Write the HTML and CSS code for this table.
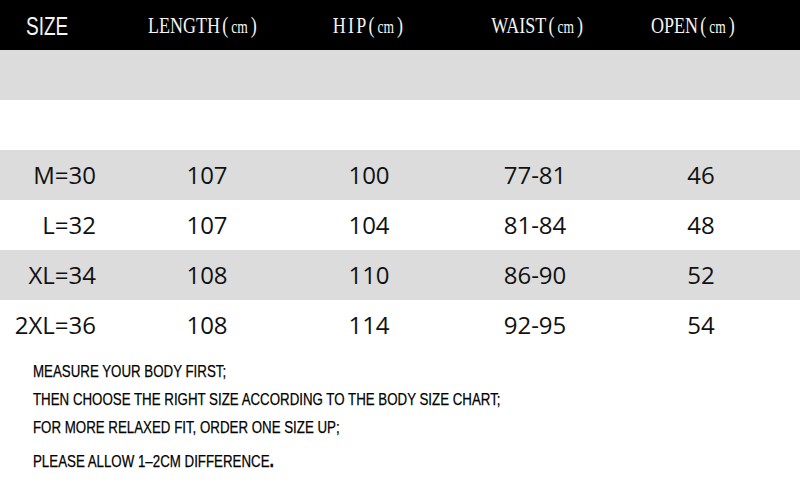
FILE: index.html
```html
<!DOCTYPE html>
<html>
<head>
<meta charset="utf-8">
<link rel="stylesheet" href="styles.css">
</head>
<body>
<div class="chart">
  <div class="head">
    <div class="hcell hsize"><span class="sizelabel">SIZE</span></div>
    <div class="hcell"><span class="hlabel">LENGTH<span class="unit">(<small>cm</small>)</span></span></div>
    <div class="hcell"><span class="hlabel"><span class="hip">HIP</span><span class="unit">(<small>cm</small>)</span></span></div>
    <div class="hcell"><span class="hlabel">WAIST<span class="unit">(<small>cm</small>)</span></span></div>
    <div class="hcell"><span class="hlabel">OPEN<span class="unit">(<small>cm</small>)</span></span></div>
  </div>
  <div class="band grey"></div>
  <div class="band"></div>
  <div class="row grey">
    <div class="c1">M=30</div><div class="c">107</div><div class="c">100</div><div class="c">77-81</div><div class="c">46</div>
  </div>
  <div class="row">
    <div class="c1">L=32</div><div class="c">107</div><div class="c">104</div><div class="c">81-84</div><div class="c">48</div>
  </div>
  <div class="row grey">
    <div class="c1">XL=34</div><div class="c">108</div><div class="c">110</div><div class="c">86-90</div><div class="c">52</div>
  </div>
  <div class="row">
    <div class="c1">2XL=36</div><div class="c">108</div><div class="c">114</div><div class="c">92-95</div><div class="c">54</div>
  </div>
  <div class="notes">
    <p class="note">MEASURE YOUR BODY FIRST;</p>
    <p class="note">THEN CHOOSE THE RIGHT SIZE ACCORDING TO THE BODY SIZE CHART;</p>
    <p class="note">FOR MORE RELAXED FIT, ORDER ONE SIZE UP;</p>
    <p class="note last">PLEASE ALLOW 1–2CM DIFFERENCE<b>.</b></p>
  </div>
</div>
</body>
</html>
```

FILE: styles.css
```css
html, body {
  margin: 0;
  padding: 0;
  background: #fff;
}
.chart {
  width: 800px;
  height: 500px;
  overflow: hidden;
}
.head {
  height: 50px;
  background: #000;
  display: grid;
  grid-template-columns: 120px 164px 168px 170px 142px 1fr;
  align-items: center;
}
.hcell {
  text-align: center;
  color: #f4f4f4;
  white-space: nowrap;
}
.hsize {
  text-align: left;
  padding-left: 26px;
}
.sizelabel {
  display: inline-block;
  font-family: "Liberation Sans", Arial, sans-serif;
  font-size: 25px;
  line-height: 50px;
  transform: scaleX(0.76);
  transform-origin: left center;
}
.hlabel {
  display: inline-block;
  font-family: "Liberation Serif", "Times New Roman", serif;
  font-size: 24px;
  line-height: 50px;
  transform: scaleX(0.75);
}
.hip {
  letter-spacing: 3px;
  margin-right: -3px;
}
.unit {
  margin-left: 3px;
}
.unit small {
  font-size: 18px;
  margin: 0 4px;
}
.band {
  height: 50px;
}
.grey {
  background: #dcdcdc;
}
.row {
  height: 50px;
  display: grid;
  grid-template-columns: 120px 174px 150px 182px 150px 1fr;
  align-items: center;
  font-family: "Open Sans", "Liberation Sans", sans-serif;
  font-size: 24px;
  line-height: 50px;
  color: #111;
}
.c1 {
  text-align: right;
  padding-right: 24px;
}
.c {
  text-align: center;
}
.notes {
  padding: 7px 0 0 33px;
}
.note {
  margin: 0;
  font-family: "Liberation Sans", Arial, sans-serif;
  font-size: 16.5px;
  line-height: 28px;
  color: #000;
  -webkit-text-stroke: 0.25px #000;
  white-space: nowrap;
  transform: scaleX(0.806);
  transform-origin: left center;
}
.note.last {
  margin-top: 5px;
}
.note b {
  font-size: 20px;
}
```
